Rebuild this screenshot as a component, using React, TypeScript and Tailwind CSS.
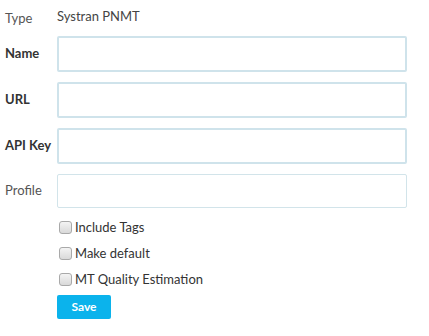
import React from "react";

const font = { fontFamily: "Lato, 'Liberation Sans', sans-serif" };

function Check({ label }: { label: string }) {
  return (
    <label className="flex h-[26px] items-center">
      <span className="ml-[2px] h-[13px] w-[13px] rounded-[3px] border border-[#a9a9a9] bg-gradient-to-b from-[#f4f4f4] to-[#d9d9d9]" />
      <span className="ml-[3px] pt-[1px] text-[13px] text-[#333]">{label}</span>
    </label>
  );
}

function Row({ label, bold, thin }: { label: string; bold?: boolean; thin?: boolean }) {
  return (
    <div className="flex items-center">
      <div
        className={`w-[57px] pl-[5px] text-[13px] ${bold ? "font-bold text-[#333]" : "text-[#555]"}`}
      >
        {label}
      </div>
      {thin ? (
        <input className="h-[34px] w-[350px] rounded-[2px] border border-[#d2e4ea] bg-white outline-none" />
      ) : (
        <input className="h-[36px] w-[350px] rounded-[2px] border-2 border-[#cfe3eb] bg-white outline-none" />
      )}
    </div>
  );
}

export default function App() {
  return (
    <div className="h-[336px] w-[429px] bg-white" style={font}>
      <div className="flex flex-col pt-[7px]">
        <div className="mb-[9px] flex h-[20px] items-center">
          <div className="w-[57px] pl-[5px] pt-[3px] text-[13px] text-[#555]">Type</div>
          <div className="text-[13px] text-[#444]">Systran PNMT</div>
        </div>
        <div className="flex flex-col gap-[10px]">
          <Row label="Name" bold />
          <Row label="URL" bold />
          <Row label="API Key" bold />
          <Row label="Profile" thin />
        </div>
        <div className="ml-[57px] mt-[6px] flex flex-col">
          <Check label="Include Tags" />
          <Check label="Make default" />
          <Check label="MT Quality Estimation" />
          <button className="mt-[3px] h-[24px] w-[54px] rounded-[2px] bg-[#0bb3ec] text-[12px] font-bold text-white">
            Save
          </button>
        </div>
      </div>
    </div>
  );
}
